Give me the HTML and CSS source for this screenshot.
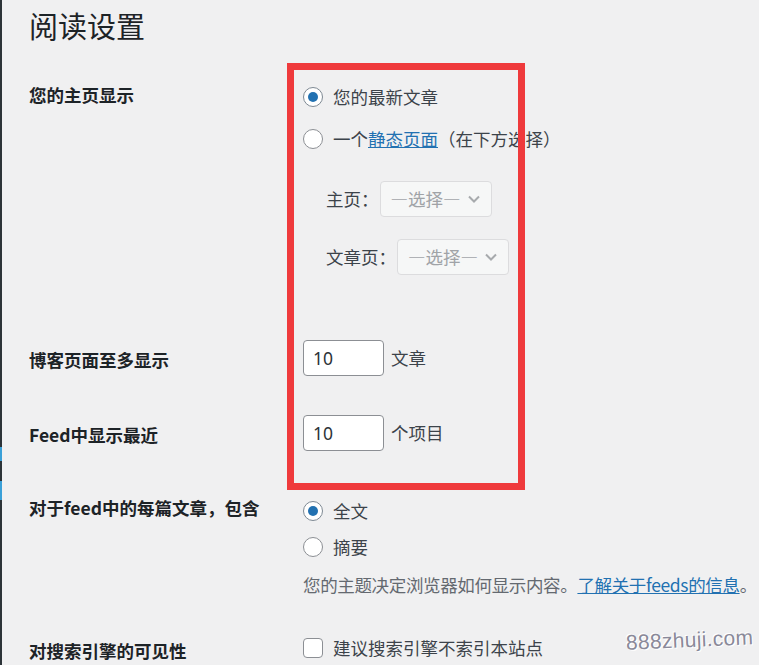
FILE: index.html
```html
<!DOCTYPE html>
<html lang="zh-CN">
<head>
<meta charset="utf-8">
<title>阅读设置</title>
<link rel="stylesheet" href="styles.css">
</head>
<body>
<div class="edge"></div>
<div class="wrap">
  <h1 class="title">阅读设置</h1>

  <div class="row row-front">
    <div class="th">您的主页显示</div>
    <div class="td">
      <label class="choice"><span class="radio checked"></span>您的最新文章</label>
      <label class="choice second"><span class="radio"></span>一个<a class="link" href="#">静态页面</a>（在下方选择）</label>
      <div class="pages">
        <div class="page-row"><span>主页：</span><span class="select sel-home">—选择—<svg class="chev" viewBox="0 0 16 16" width="16" height="16"><path d="M3 5.5 L8 10.5 L13 5.5" fill="none" stroke="#a7aaad" stroke-width="2"/></svg></span></div>
        <div class="page-row second-page"><span>文章页：</span><span class="select">—选择—<svg class="chev" viewBox="0 0 16 16" width="16" height="16"><path d="M3 5.5 L8 10.5 L13 5.5" fill="none" stroke="#a7aaad" stroke-width="2"/></svg></span></div>
      </div>
    </div>
  </div>

  <div class="row row-posts">
    <div class="th">博客页面至多显示</div>
    <div class="td inline"><span class="num">10</span>文章</div>
  </div>

  <div class="row row-feed">
    <div class="th">Feed中显示最近</div>
    <div class="td inline"><span class="num">10</span>个项目</div>
  </div>

  <div class="row row-content">
    <div class="th">对于feed中的每篇文章，包含</div>
    <div class="td">
      <label class="choice"><span class="radio checked"></span>全文</label>
      <label class="choice summary"><span class="radio"></span>摘要</label>
      <p class="desc">您的主题决定浏览器如何显示内容。<a class="link" href="#">了解关于feeds的信息</a>。</p>
    </div>
  </div>

  <div class="row row-search">
    <div class="th">对搜索引擎的可见性</div>
    <div class="td">
      <label class="choice"><span class="checkbox"></span>建议搜索引擎不索引本站点</label>
    </div>
  </div>
</div>

<div class="highlight"></div>
<div class="watermark">888zhuji.com</div>
</body>
</html>
```

FILE: styles.css
```css
* { box-sizing: border-box; }

html, body {
  margin: 0;
  padding: 0;
  height: 100%;
}

body {
  background: #f0f0f1;
  font-family: "Noto Sans CJK SC", "Noto Sans", sans-serif;
  font-size: 17.5px;
  color: #3c434a;
  overflow: hidden;
  position: relative;
}

.edge {
  position: absolute;
  left: 0;
  top: 0;
  bottom: 0;
  width: 2px;
  background: linear-gradient(to bottom,
    #2c3338 0, #2c3338 447px,
    #3aa0d8 447px, #3aa0d8 461px,
    #2c3338 461px, #2c3338 481px,
    #3aa0d8 481px, #3aa0d8 500px,
    #2c3338 500px);
}

.wrap {
  padding-left: 29px;
}

.title {
  margin: 0;
  padding-top: 6px;
  height: 70px;
  font-size: 29px;
  font-weight: 400;
  line-height: 38px;
  color: #1d2327;
}

.row {
  display: grid;
  grid-template-columns: 274px 1fr;
  align-items: start;
}

.th {
  font-weight: 700;
  color: #1d2327;
  line-height: 24px;
  white-space: nowrap;
}

.td {
  line-height: 24px;
  white-space: nowrap;
}

.choice {
  display: flex;
  align-items: center;
  height: 24px;
  color: #3c434a;
}

.radio {
  width: 20px;
  height: 20px;
  border: 1px solid #8c8f94;
  border-radius: 50%;
  background: #fff;
  margin-right: 10px;
  display: inline-flex;
  align-items: center;
  justify-content: center;
  flex: none;
}

.radio.checked { border-color: #7e8993; }
.radio.checked::after {
  content: "";
  width: 10px;
  height: 10px;
  border-radius: 50%;
  background: #2271b1;
}

.checkbox {
  width: 20px;
  height: 20px;
  border: 1px solid #8c8f94;
  border-radius: 4px;
  background: #fff;
  margin-right: 10px;
  flex: none;
}

.link {
  color: #2271b1;
  text-decoration: underline;
}

/* row 1 */
.row-front .th { padding-top: 13px; }
.row-front .td { padding-top: 15px; }
.row-front .second { margin-top: 18px; }

.pages {
  margin-left: 23px;
  margin-top: 30px;
}

.page-row {
  display: flex;
  align-items: center;
  height: 36px;
  color: #3c434a;
}

.page-row.second-page { margin-top: 22px; }

.select {
  display: inline-flex;
  align-items: center;
  justify-content: space-between;
  height: 36px;
  width: 112px;
  margin-left: 1px;
  padding: 0 9px 0 10px;
  border: 1px solid #dcdcde;
  border-radius: 4px;
  background: #f6f7f7;
  color: #a0a3a7;
}

.chev { flex: none; }

/* row 2 + 3 */
.inline {
  display: flex;
  align-items: center;
  color: #3c434a;
}

.num {
  display: inline-flex;
  align-items: center;
  width: 81px;
  height: 36px;
  padding-left: 9px;
  margin-right: 7px;
  border: 1px solid #8c8f94;
  border-radius: 4px;
  background: #fff;
  color: #2c3338;
  font-family: "Noto Sans", sans-serif;
}

.row-posts { padding-top: 65px; }
.row-posts .th { padding-top: 8px; }

.row-feed { padding-top: 39px; }
.row-feed .th { padding-top: 8px; }

/* row 4 */
.row-content { padding-top: 45px; }
.row-content .td { padding-top: 3px; }
.row-content .summary { margin-top: 12px; }

.desc {
  margin: 14px 0 0 0;
  color: #646970;
  line-height: 24px;
  letter-spacing: -0.35px;
}

/* row 5 */
.row-search { padding-top: 39px; }
.row-search .th { padding-top: 3px; }

/* annotation overlay */
.highlight {
  position: absolute;
  left: 287px;
  top: 63px;
  width: 238px;
  height: 427px;
  border: 7px solid #ef3a3c;
  z-index: 5;
}

.watermark {
  position: absolute;
  left: 626px;
  top: 628px;
  font-family: "Liberation Sans", sans-serif;
  font-size: 21px;
  letter-spacing: 0.3px;
  color: #8a8999;
  text-shadow: 1px 1px 0 #ffffff, -1px -1px 0 #ffffff;
  transform: rotate(-2.5deg);
  z-index: 6;
}
```
